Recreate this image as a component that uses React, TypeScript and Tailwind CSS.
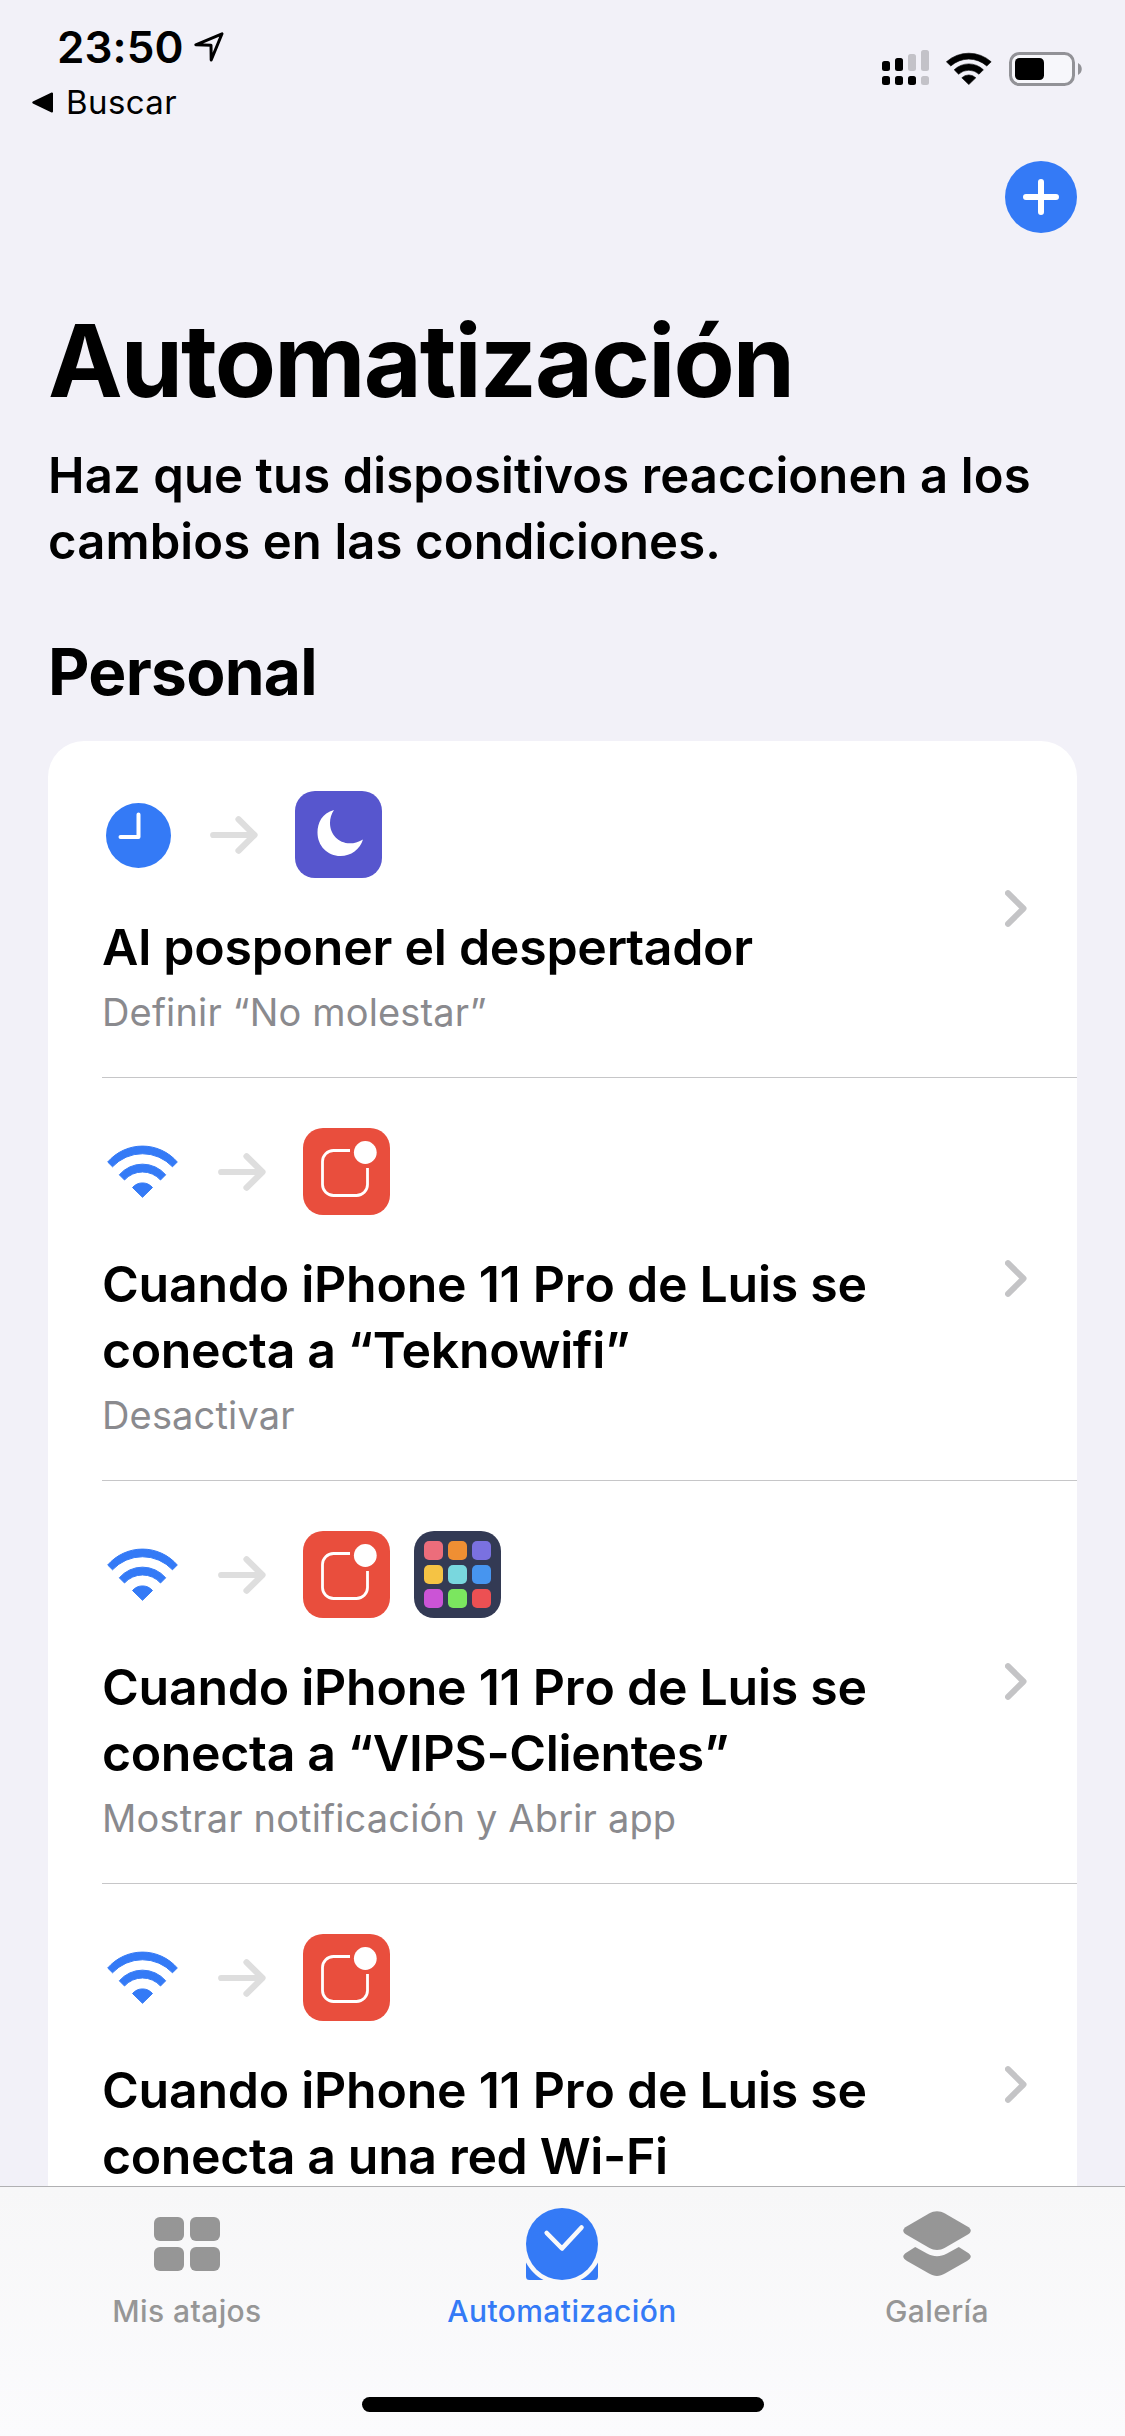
import React from 'react';
import clsx from 'clsx';

type Trigger = 'clock' | 'wifi';
type Action = 'moon' | 'notification' | 'apps';

interface Automation {
  id: number;
  trigger: Trigger;
  actions: Action[];
  title: string[];
  subtitle?: string;
}

const automations: Automation[] = [
  { id: 1, trigger: 'clock', actions: ['moon'], title: ['Al posponer el despertador'], subtitle: 'Definir “No molestar”' },
  { id: 2, trigger: 'wifi', actions: ['notification'], title: ['Cuando iPhone 11 Pro de Luis se', 'conecta a “Teknowifi”'], subtitle: 'Desactivar' },
  { id: 3, trigger: 'wifi', actions: ['notification', 'apps'], title: ['Cuando iPhone 11 Pro de Luis se', 'conecta a “VIPS-Clientes”'], subtitle: 'Mostrar notificación y Abrir app' },
  { id: 4, trigger: 'wifi', actions: ['notification'], title: ['Cuando iPhone 11 Pro de Luis se', 'conecta a una red Wi-Fi'] },
];

const appColors = ['#ec6d7b', '#ef8f33', '#7a71e0', '#f5c344', '#79d7de', '#4795ef', '#cb54d6', '#7be65f', '#ec5053'];

function ClockIcon() {
  return (
    <svg width="65" height="65" viewBox="0 0 65 65" fill="none">
      <circle cx="32.5" cy="32.5" r="32.5" fill="#347af6" />
      <path d="M32.5 11.5V34H14.5" stroke="#fff" strokeWidth="4" strokeLinecap="round" strokeLinejoin="round" />
    </svg>
  );
}

function WifiIcon() {
  return (
    <svg width="71" height="53" viewBox="0 0 71 53" fill="#347af6" stroke="#347af6" strokeWidth="1" strokeLinejoin="round">
      <path d="M.7 17A46 46 0 0 1 70.3 17L65.5 21.8A41 41 0 0 0 5.5 21.8Z" />
      <path d="M12.3 29.8A30.6 30.6 0 0 1 58.7 29.8L53.5 35A24.2 24.2 0 0 0 17.5 35Z" />
      <path d="M25.5 42.5A13.2 13.2 0 0 1 45.5 42.5L35.5 52.3Z" />
    </svg>
  );
}

function ArrowIcon() {
  return (
    <svg width="48" height="38" viewBox="0 0 48 38" fill="none" stroke="#dedede" strokeWidth="6.2" strokeLinecap="round" strokeLinejoin="round">
      <path d="M3.2 19H43.500M28.500 3.300L44.500 19L28.500 34.700" />
    </svg>
  );
}

function ActionIcon({ action }: { action: Action }) {
  if (action === 'moon') {
    return (
      <div className="size-[87px] rounded-[20px] bg-[#5756ce]">
        <svg width="87" height="87" viewBox="0 0 87 87">
          <path d="M39 19C27 22 22.5 32 22.5 41.5C22.5 55 32.5 65 45.5 65C56 65 65 58.5 68 48.5C63 51.5 59 52.3 55 52.3C43 52.3 35 43 35 32C35 27 36.3 23 39 19Z" fill="#fff" />
        </svg>
      </div>
    );
  }
  if (action === 'notification') {
    return (
      <div className="size-[87px] rounded-[20px] bg-[#e94e3d]">
        <svg width="87" height="87" viewBox="0 0 87 87" fill="none">
          <path d="M47 22.5H30.5A11 11 0 0 0 19.5 33.5V56.5A11 11 0 0 0 30.5 67.5H53.5A11 11 0 0 0 64.5 56.5V40" stroke="#fff" strokeWidth="2.8" />
          <circle cx="62.3" cy="24.5" r="11.4" fill="#fff" />
        </svg>
      </div>
    );
  }
  return (
    <div className="grid size-[87px] grid-cols-3 gap-[5px] rounded-[20px] bg-[#333a54] p-[10px]">
      {appColors.map((color) => (
        <div key={color} className="rounded-[5px]" style={{ backgroundColor: color }} />
      ))}
    </div>
  );
}

function AutomationRow({ item }: { item: Automation }) {
  return (
    <div className="ml-[54px] flex items-center justify-between border-b border-[#c6c6c8] pr-[50px] pt-[50px] pb-[42px]">
      <div>
        <div className="flex h-[87px] items-center">
          <div className={clsx('flex items-center', item.trigger === 'clock' ? 'w-[108px] pl-1 pt-0.5' : 'w-[116px] pl-[5px]')}>
            {item.trigger === 'clock' ? <ClockIcon /> : <WifiIcon />}
          </div>
          <ArrowIcon />
          <div className="ml-[37px] flex gap-6">
            {item.actions.map((action) => (
              <ActionIcon key={action} action={action} />
            ))}
          </div>
        </div>
        <h3 className="mt-9 text-[50px] leading-[66px] font-semibold tracking-[-0.35px] text-black">
          {item.title.map((line) => (
            <span key={line} className="block whitespace-nowrap first:tracking-[-0.25px] first:[font-kerning:none]">{line}</span>
          ))}
        </h3>
        <p className="mt-[9px] min-h-[46px] text-[38px] leading-[46px] tracking-[0.16px] whitespace-nowrap text-[#8a8a8e]">{item.subtitle}</p>
      </div>
      <svg width="22" height="37" viewBox="0 0 22 37" fill="none" className="mb-[9px] shrink-0">
        <path d="M3 3.200L18.500 18.500L3 33.800" stroke="#c4c4c6" strokeWidth="6" strokeLinecap="round" strokeLinejoin="round" />
      </svg>
    </div>
  );
}

function StatusBar() {
  return (
    <div className="flex h-[130px] shrink-0 justify-between pr-[43px] pl-8">
      <div className="pt-[21px]">
        <div className="flex h-[52px] items-center pl-[25px]">
          <span className="w-[137px] text-[44px] leading-[52px] font-semibold tracking-[0.1px]">23:50</span>
          <svg width="30" height="30" viewBox="0 0 30 30" fill="none" stroke="#000" strokeWidth="3" strokeLinejoin="round">
            <path d="M1.8 12.8L28 1.8L17.2 28L17 13.3Z" />
          </svg>
        </div>
        <div className="mt-[9px] flex h-10 items-center gap-[13px]">
          <svg width="21" height="21" viewBox="0 0 21 21" stroke="#000" strokeWidth="2" strokeLinejoin="round">
            <path d="M1.3 10.5L20 1.5V19.5Z" />
          </svg>
          <span className="text-[33px] leading-10 tracking-[0.4px]">Buscar</span>
        </div>
      </div>
      <div className="flex items-start pt-[50px]">
        <svg width="47" height="35" viewBox="0 0 47 35">
          <rect x="0" y="11" width="8" height="10" rx="2.5" />
          <rect x="13" y="8" width="8" height="13" rx="2.5" />
          <rect x="26" y="4" width="8" height="17" rx="2.5" fill="#c3c2c8" />
          <rect x="39" y="0" width="8" height="21" rx="2.5" fill="#c3c2c8" />
          <rect x="0" y="26" width="8" height="9" rx="2.5" />
          <rect x="13" y="26" width="8" height="9" rx="2.5" />
          <rect x="26" y="26" width="8" height="9" rx="2.5" />
          <rect x="39" y="26" width="8" height="9" rx="2.5" fill="#c3c2c8" />
        </svg>
        <svg width="46" height="33" viewBox="0 0 46 33" className="mt-0.5 ml-[17px]" stroke="#000" strokeWidth="0.6" strokeLinejoin="round">
          <path d="M.4 9.8A33.5 33.5 0 0 1 45.2 9.8L40.8 14A27 27 0 0 0 4.8 14Z" />
          <path d="M8.2 17.8A21 21 0 0 1 37.4 17.8L33 22.2A15 15 0 0 0 12.6 22.2Z" />
          <path d="M15.8 25.8A10 10 0 0 1 29.8 25.8L22.8 32.6Z" />
        </svg>
        <svg width="73" height="34" viewBox="0 0 73 34" fill="none" className="mt-0.5 ml-[17px]">
          <rect x="1.5" y="1.5" width="63" height="31" rx="9" fill="#f7f7fb" stroke="#929297" strokeWidth="3" />
          <rect x="6" y="6" width="29" height="22" rx="4.5" fill="#000" />
          <path d="M69 11C74 13.500 74 20.500 69 23Z" fill="#929297" />
        </svg>
      </div>
    </div>
  );
}

function TabBar() {
  return (
    <nav className="flex h-[250px] shrink-0 flex-col items-center border-t border-[#b0b0b2] bg-linear-to-b from-[#f7f7f8] to-[#fbfbfd]">
      <div className="grid w-full grid-cols-[374px_376px_374px] text-[30px] leading-9 font-medium tracking-[0.4px] text-[#969696]">
        <div className="flex flex-col items-center">
          <div className="flex h-[106px] items-start pt-[30px]">
            <div className="grid grid-cols-2 gap-1.5">
              <div className="h-6 w-[30px] rounded-[6px] bg-[#969696]" />
              <div className="h-6 w-[30px] rounded-[6px] bg-[#969696]" />
              <div className="h-6 w-[30px] rounded-[6px] bg-[#969696]" />
              <div className="h-6 w-[30px] rounded-[6px] bg-[#969696]" />
            </div>
          </div>
          <span>Mis atajos</span>
        </div>
        <div className="flex flex-col items-center text-[#347af6]">
          <div className="flex h-[106px] items-start pt-[21px]">
            <svg width="72" height="72" viewBox="0 0 72 72" fill="#347af6">
              <circle cx="36" cy="36" r="36" />
              <path d="M20.700 25L36 40.500L55.500 19.500" fill="none" stroke="#f9f9fa" strokeWidth="4.600" strokeLinecap="round" strokeLinejoin="round" />
              <path d="M0 54.500C4 62 10 68 17.500 72H3.500A3.500 3.500 0 0 1 0 68.500Z" />
              <path d="M72 54.500C68 62 62 68 54.500 72H68.500A3.500 3.500 0 0 0 72 68.500Z" />
            </svg>
          </div>
          <span>Automatización</span>
        </div>
        <div className="flex flex-col items-center">
          <div className="flex h-[106px] items-start pt-6">
            <svg width="68" height="66" viewBox="0 0 68 66" fill="#969696">
              <path d="M26 2.5C31.500-.4 36.500-.4 42 2.5L64 15.300C69 18.300 69 21 64 24L42 36.800C36.500 39.800 31.500 39.800 26 36.800L4 24C-1 21-1 18.300 4 15.300Z" />
              <path d="M12.200 36L24 42.500C31 46 37 46 44 42.500L55.800 36L64 41.200C69 44.200 69 47 64 50L42 62.500C36.500 65.800 31.500 65.800 26 62.500L4 50C-1 47-1 44.200 4 41.200Z" />
            </svg>
          </div>
          <span>Galería</span>
        </div>
      </div>
      <div className="mt-[68px] h-[15px] w-[402px] rounded-full bg-black" />
    </nav>
  );
}

export default function App() {
  return (
    <div className="flex h-[2436px] w-[1125px] flex-col overflow-hidden bg-[#f2f1f8] font-[Inter,sans-serif] text-black">
      <StatusBar />
      <main className="flex h-[2056px] shrink-0 flex-col overflow-hidden px-12 pt-[31px]">
        <button className="flex size-[72px] shrink-0 items-center justify-center self-end rounded-full bg-[#347af6]">
          <svg width="36" height="36" viewBox="0 0 36 36" fill="none" stroke="#fff" strokeWidth="6" strokeLinecap="round">
            <path d="M18 3V33M3 18H33" />
          </svg>
        </button>
        <h1 className="mt-[68px] text-[100px] leading-[120px] font-bold tracking-[-1.9px]">Automatización</h1>
        <p className="mt-[22px] text-[49px] leading-[66px] font-semibold tracking-[0.12px] whitespace-nowrap">
          Haz que tus dispositivos reaccionen a los
          <br />
          cambios en las condiciones.
        </p>
        <h2 className="mt-[59px] text-[64px] leading-[76px] font-bold tracking-[-0.7px]">Personal</h2>
        <section className="mt-[31px] rounded-t-[36px] bg-white">
          {automations.map((item) => (
            <AutomationRow key={item.id} item={item} />
          ))}
        </section>
      </main>
      <TabBar />
    </div>
  );
}
